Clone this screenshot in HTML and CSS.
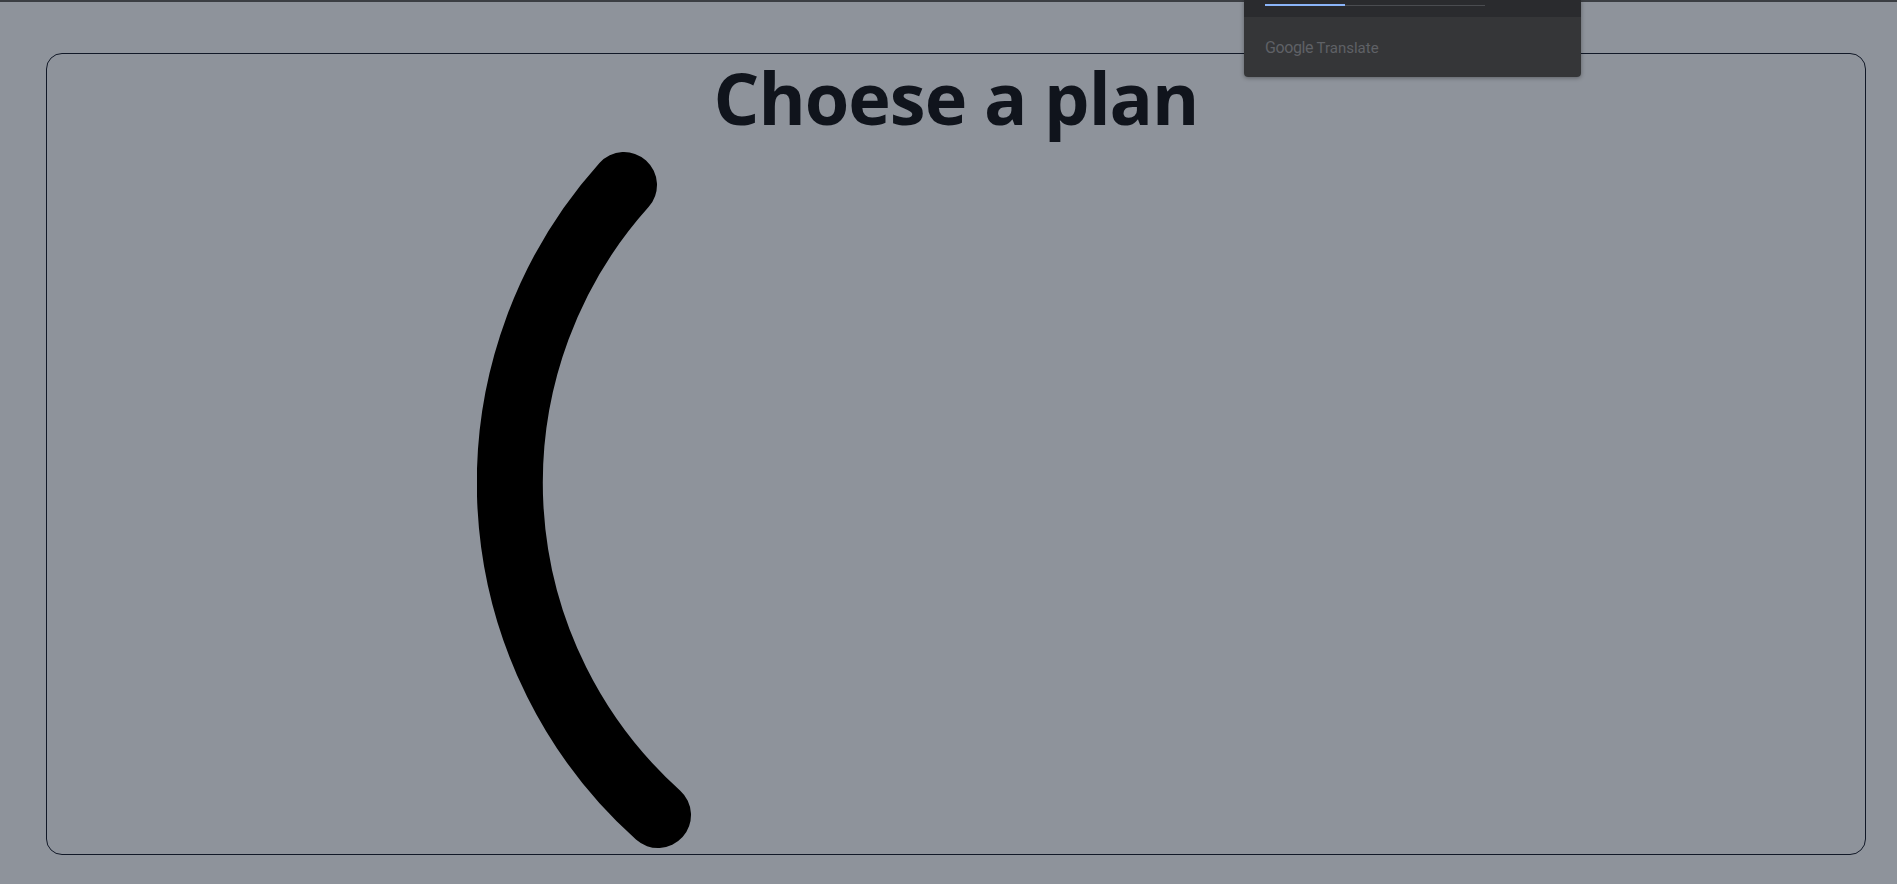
FILE: index.html
```html
<!doctype html>
<html lang="en">
  <head>
    <meta charset="UTF-8" />
    <meta name="viewport" content="width=device-width, initial-scale=1.0" />
    <title>Choese a plan</title>
    <link rel="stylesheet" href="styles.css">
  </head>
  <body>
    <div class="top-strip"></div>

    <div class="plan-card">
      <h1 class="plan-title">Choese a plan</h1>
      <div class="loader-area">
        <svg class="loader" width="958" height="958" viewBox="0 0 958 958">
          <path d="M181 811 A446 446 0 0 1 147 181" />
        </svg>
      </div>
    </div>

    <!-- translate popup over the page -->
    <div class="translate-popup">
      <div class="translate-top">
        <div class="progress">
          <span class="progress-done"></span>
          <span class="progress-rest"></span>
        </div>
      </div>
      <div class="translate-bottom">
        <span class="brand-google">Google</span>
        <span class="brand-translate">Translate</span>
      </div>
    </div>
  </body>
</html>
```

FILE: styles.css
```css
html,
body {
  height: 100%;
}
body {
  margin: 0;
  background-color: #8e939b;
  font-family: "Open Sans", Arial, sans-serif;
  overflow: hidden;
}
.top-strip {
  height: 2px;
  background-color: #3b3e43;
}
.plan-card {
  box-sizing: border-box;
  height: 802px;
  margin: 51px 31px 0 46px;
  border: 1px solid #111827;
  border-radius: 16px;
  display: flex;
  flex-direction: column;
}
.plan-title {
  margin: 7px 0 0;
  font-size: 72px;
  line-height: 72px;
  font-weight: 700;
  letter-spacing: -1px;
  text-align: center;
  color: #10141c;
}
.loader-area {
  flex: 1;
  min-height: 0;
  padding-bottom: 22px;
  overflow: hidden;
  display: flex;
  align-items: center;
  justify-content: center;
}
.loader {
  flex-shrink: 0;
}
.loader path {
  fill: none;
  stroke: #000;
  stroke-width: 66;
  stroke-linecap: round;
}
.translate-popup {
  position: absolute;
  top: 0;
  left: 1244px;
  width: 337px;
  height: 77px;
  border-radius: 0 0 4px 4px;
  overflow: hidden;
  box-shadow: 0 1px 4px rgba(0, 0, 0, 0.35);
  display: flex;
  flex-direction: column;
}
.translate-top {
  height: 17px;
  background-color: #2a2b2e;
  padding: 4px 0 0 21px;
  box-sizing: border-box;
}
.progress {
  display: flex;
  align-items: flex-end;
  width: 220px;
  height: 2px;
}
.progress-done {
  width: 80px;
  height: 2px;
  background-color: #8ab4f8;
}
.progress-rest {
  flex: 1;
  height: 1px;
  background-color: #4a4c50;
}
.translate-bottom {
  flex: 1;
  background-color: #353638;
  padding: 21px 0 0 21px;
  color: #5f6166;
  font-family: Roboto, Arial, sans-serif;
  font-size: 15px;
  line-height: 20px;
}
.brand-google {
  font-size: 16px;
  letter-spacing: -0.4px;
}
```
